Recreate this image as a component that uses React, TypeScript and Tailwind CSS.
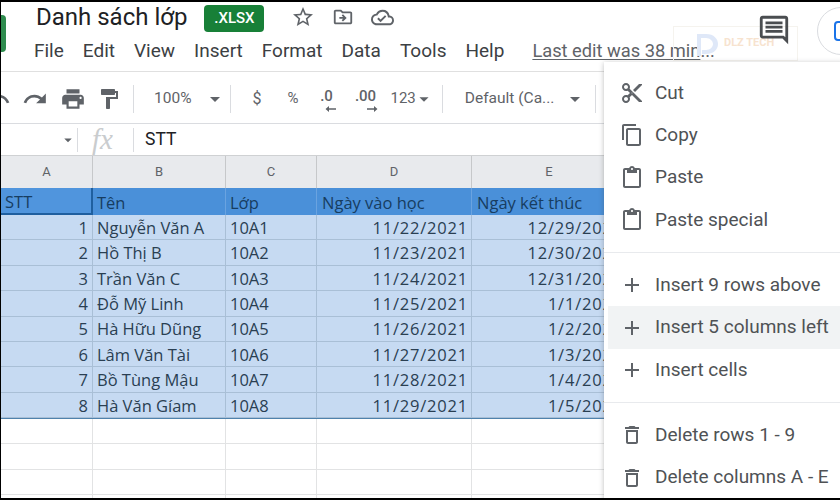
import {
  MdAdd,
  MdArrowDropDown,
  MdFormatPaint,
  MdOutlineComment,
  MdOutlineCloudDone,
  MdOutlineContentCopy,
  MdOutlineContentCut,
  MdOutlineContentPaste,
  MdOutlineDelete,
  MdOutlineDriveFileMove,
  MdPrint,
  MdRedo,
  MdStarBorder,
  MdUndo,
} from 'react-icons/md'
import type { ReactNode } from 'react'

const students = [
  ['1', 'Nguyễn Văn A', '10A1', '11/22/2021', '12/29/2021'],
  ['2', 'Hồ Thị B', '10A2', '11/23/2021', '12/30/2021'],
  ['3', 'Trần Văn C', '10A3', '11/24/2021', '12/31/2021'],
  ['4', 'Đỗ Mỹ Linh', '10A4', '11/25/2021', '1/1/2022'],
  ['5', 'Hà Hữu Dũng', '10A5', '11/26/2021', '1/2/2022'],
  ['6', 'Lâm Văn Tài', '10A6', '11/27/2021', '1/3/2022'],
  ['7', 'Bồ Tùng Mậu', '10A7', '11/28/2021', '1/4/2022'],
  ['8', 'Hà Văn Gíam', '10A8', '11/29/2021', '1/5/2022'],
]

const menus = ['File', 'Edit', 'View', 'Insert', 'Format', 'Data', 'Tools', 'Help']
const columns = 'grid grid-cols-[92px_133px_91px_155px_155px] w-[626px]'

function MenuItem({ icon, label, active }: { icon: ReactNode; label: string; active?: boolean }) {
  return (
    <div className={`flex h-[42.3px] items-center ${active ? 'ml-[4px] bg-[#f1f3f4]' : ''}`}>
      <div className={`flex justify-center pl-[5px] text-[24px] text-[#5f6368] ${active ? 'w-[47px] pr-[4px]' : 'w-[51px]'}`}>
        {icon}
      </div>
      <span className="whitespace-nowrap text-[19px] text-[#4f5255]">{label}</span>
    </div>
  )
}

function DecimalArrow({ flip }: { flip?: boolean }) {
  return (
    <svg width="11" height="8" viewBox="0 0 11 8" className={flip ? 'rotate-180' : ''}>
      <path d="M0.5 4 L4 1 V3.2 H11 V4.8 H4 V7 Z" fill="#5f6368" />
    </svg>
  )
}

export default function App() {
  return (
    <div className="relative h-[500px] w-[840px] overflow-hidden border-t-2 border-b-2 border-l border-black bg-white font-['Roboto',sans-serif]">
      {/* Title + menu */}
      <header className="relative flex h-[70px] border-b border-[#e0e0e0]">
        <div className="mt-[13px] h-[37px] w-[5px] rounded-r-sm bg-[#2e8b4e]" />
        <div className="ml-[28px] flex flex-col">
          <div className="flex h-[29px] items-center pl-[2px]">
            <h1 className="text-[24px] leading-none text-[#202124]">Danh sách lớp</h1>
            <span className="ml-[17px] mt-[3px] flex h-[27px] w-[60px] items-center justify-center rounded bg-[#188038] text-[15px] font-medium text-white">
              .XLSX
            </span>
            <MdStarBorder className="ml-[27px] mt-[1px] text-[24px] text-[#5f6368]" />
            <MdOutlineDriveFileMove className="ml-[17px] mt-[1px] text-[22px] text-[#5f6368]" />
            <MdOutlineCloudDone className="ml-[17px] mt-[1px] text-[23px] text-[#5f6368]" />
          </div>
          <nav className="mt-[5px] flex h-[30px] items-center gap-[19px] text-[19px] text-[#3c4043]">
            {menus.map((m) => (
              <span key={m}>{m}</span>
            ))}
            <span className="ml-[9px] whitespace-nowrap text-[18.3px] text-[#5f6368]">
              <span className="underline underline-offset-2">Last edit was 38 min</span>...
            </span>
          </nav>
        </div>
        {/* watermark */}
        <div className="absolute left-[672px] top-[24px] flex h-[35px] w-[125px] items-center gap-[4px] border border-[#f5f3ee] pl-[20px] text-[11px] font-bold text-[#f7e3cf]">
          <svg width="26" height="26" viewBox="0 0 26 26" className="shrink-0">
            <path d="M3 3 H12 C20 3 24 8 24 13 C24 19 19 23 12 23 H8 V19 H12 C16 19 19 16 19 13 C19 10 16 7 12 7 H7 V25 H3 Z" fill="#dfe8f8" />
          </svg>
          DLZ TECH
        </div>
        <MdOutlineComment className="absolute left-[756px] top-[11px] text-[34px] text-[#4a4d50]" />
        <div className="absolute left-[816px] top-[5px] flex h-[48px] w-[48px] items-center rounded-full border border-[#dadce0] pl-[16px]">
          <div className="h-[20px] w-[14px] rounded-sm border-2 border-[#1a73e8]" />
        </div>
      </header>

      {/* Toolbar */}
      <div className="flex h-[52px] items-center border-b border-[#dadce0] pt-[2px] text-[#5f6368]">
        <MdUndo className="ml-[-16px] text-[26px]" />
        <MdRedo className="ml-[11px] text-[26px]" />
        <MdPrint className="ml-[12px] text-[26px]" />
        <MdFormatPaint className="ml-[11px] text-[24px]" />
        <div className="ml-[12px] h-[28px] w-px bg-[#dadce0]" />
        <span className="ml-[20px] text-[15.5px]">100%</span>
        <MdArrowDropDown className="ml-[11px] text-[24px]" />
        <div className="ml-[3px] h-[28px] w-px bg-[#dadce0]" />
        <span className="ml-[22px] text-[16px]">$</span>
        <span className="ml-[26px] text-[15px]">%</span>
        <span className="relative ml-[16px] flex h-[30px] w-[24px] flex-col items-center text-[15px] font-medium leading-[24px]">
          .0
          <span className="absolute left-[10px] top-[21px] flex">
            <DecimalArrow />
          </span>
        </span>
        <span className="relative ml-[14px] flex h-[30px] w-[26px] flex-col items-center text-[15px] font-medium leading-[24px]">
          .00
          <span className="absolute left-[14px] top-[21px] flex">
            <DecimalArrow flip />
          </span>
        </span>
        <span className="ml-[12px] text-[15px]">123</span>
        <MdArrowDropDown className="ml-[-3px] text-[22px]" />
        <div className="ml-[7px] h-[28px] w-px bg-[#dadce0]" />
        <span className="ml-[22px] whitespace-nowrap text-[15.5px]">Default (Ca...</span>
        <MdArrowDropDown className="ml-[9px] text-[24px]" />
        <div className="ml-[8px] h-[28px] w-px bg-[#dadce0]" />
      </div>

      {/* Formula bar */}
      <div className="flex h-[32px] items-center border-b border-[#cfd1d3]">
        <div className="flex w-[76px] justify-end">
          <MdArrowDropDown className="text-[18px] text-[#5f6368]" />
        </div>
        <div className="h-[24px] w-px bg-[#dadce0]" />
        <span className="ml-[14px] w-[41px] font-['Liberation_Serif',serif] text-[29px] italic leading-none text-[#c9ccce]">
          fx
        </span>
        <div className="h-[24px] w-px bg-[#dadce0]" />
        <span className="ml-[11px] text-[17.5px] text-[#202124]">STT</span>
      </div>

      {/* Sheet */}
      <div className="overflow-hidden font-['Open_Sans',sans-serif] text-[16.5px] text-[#2a3f52]">
        <div className={`${columns} h-[32px] bg-[#e8eaed] text-[13px] text-[#5f6368]`}>
          {['A', 'B', 'C', 'D', 'E'].map((c) => (
            <div key={c} className="flex items-center justify-center border-r border-[#c6c8ca] font-['Roboto',sans-serif]">
              {c}
            </div>
          ))}
        </div>
        <div className={`${columns} h-[27px] bg-[#4a90d9]`}>
          {['STT', 'Tên', 'Lớp', 'Ngày vào học', 'Ngày kết thúc'].map((h, i) => (
            <div
              key={h}
              className={`flex items-center overflow-hidden whitespace-nowrap pt-[3px] text-[#173d61] ${
                i === 0
                  ? 'border-r-2 border-b-2 border-[#1f5f9f] bg-[#5095dd] pl-[4px]'
                  : i < 3
                    ? 'border-r border-[#6aa3e0] pl-[4px]'
                    : 'border-r border-[#6aa3e0] pl-[5px]'
              }`}
            >
              {h}
            </div>
          ))}
        </div>
        <div className="w-[626px] border-b border-[#4f82ad] bg-[#c6daf2]">
          {students.map((row) => (
            <div key={row[0]} className={`${columns} h-[25.4px] border-b border-[#a9bfd6]`}>
              {row.map((cell, i) => (
                <div
                  key={i}
                  className={`flex items-center overflow-hidden whitespace-nowrap border-r border-[#a9bfd6] pt-[2px] ${
                    i === 0
                      ? 'justify-end pr-[4px]'
                      : i >= 3
                        ? 'justify-end pr-[3px] tracking-[0.8px]'
                        : 'pl-[4px]'
                  }`}
                >
                  {cell}
                </div>
              ))}
            </div>
          ))}
        </div>
        {[0, 1, 2, 3].map((r) => (
          <div key={r} className={`${columns} h-[25.2px] border-b border-[#e2e3e4]`}>
            {[0, 1, 2, 3, 4].map((c) => (
              <div key={c} className="border-r border-[#e2e3e4]" />
            ))}
          </div>
        ))}
      </div>

      {/* Context menu */}
      <div className="absolute left-[603px] top-[60px] h-[440px] w-[240px] bg-white pt-[10px] shadow-[0_1px_5px_rgba(60,64,67,0.35)]">
        <MenuItem icon={<MdOutlineContentCut />} label="Cut" />
        <MenuItem icon={<MdOutlineContentCopy />} label="Copy" />
        <MenuItem icon={<MdOutlineContentPaste />} label="Paste" />
        <MenuItem icon={<MdOutlineContentPaste />} label="Paste special" />
        <div className="my-[11px] h-px bg-[#e8eaed]" />
        <MenuItem icon={<MdAdd />} label="Insert 9 rows above" />
        <MenuItem icon={<MdAdd />} label="Insert 5 columns left" active />
        <MenuItem icon={<MdAdd />} label="Insert cells" />
        <div className="my-[11px] h-px bg-[#e8eaed]" />
        <MenuItem icon={<MdOutlineDelete />} label="Delete rows 1 - 9" />
        <MenuItem icon={<MdOutlineDelete />} label="Delete columns A - E" />
      </div>
    </div>
  )
}
